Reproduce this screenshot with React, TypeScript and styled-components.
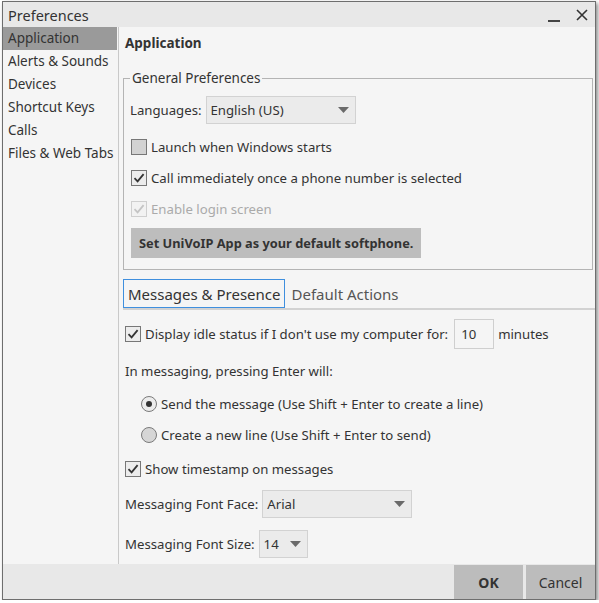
import React from 'react';
import styled, { createGlobalStyle } from 'styled-components';

const GlobalStyle = createGlobalStyle`
  body {
    margin: 0;
    background: #ffffff;
    font-family: "Noto Sans", "Open Sans", sans-serif;
  }
`;

const Window = styled.div`
  margin: 1px 0 0 2px;
  width: 594px;
  height: 599px;
  box-sizing: border-box;
  border: 1px solid #6e6e6e;
  box-shadow: 2px 2px 4px rgba(0, 0, 0, 0.45);
  display: flex;
  flex-direction: column;
  background: #f5f5f5;
  color: #333;
  font-size: 13px;
`;

const TitleBar = styled.div`
  height: 25px;
  flex: none;
  background: #e8e8e8;
  display: flex;
  align-items: center;
  padding: 0 7px 0 5px;
`;

const Title = styled.div`
  flex: 1;
  font-size: 14.5px;
  color: #333;
`;

const Controls = styled.div`
  display: flex;
  align-items: center;
  gap: 16px;
`;

const Minimize = styled.div`
  width: 12px;
  height: 2px;
  background: #444;
  margin-top: 12px;
`;

const Body = styled.div`
  flex: 1;
  display: flex;
  min-height: 0;
`;

const Sidebar = styled.div`
  width: 116px;
  flex: none;
  box-sizing: border-box;
  border-right: 1px solid #c9c9c9;
  display: flex;
  flex-direction: column;
`;

const NavItem = styled.div<{ $active?: boolean }>`
  height: 23px;
  line-height: 23px;
  padding-left: 5px;
  margin-right: 1px;
  font-size: 13.5px;
  white-space: nowrap;
  color: #333;
  background: ${({ $active }) => ($active ? '#9a9a9a' : 'transparent')};
`;

const Content = styled.div`
  flex: 1;
  padding: 0 0 0 4px;
  display: flex;
  flex-direction: column;
`;

const Heading = styled.div`
  padding: 6px 0 0 2px;
  line-height: 20px;
  font-size: 13.5px;
  font-weight: bold;
`;

const Group = styled.fieldset`
  margin: 16px 2px 0 0;
  padding: 9px 6px 11px 6px;
  border: 1px solid #b4b4b4;
  display: flex;
  flex-direction: column;
  min-width: 0;
`;

const Legend = styled.legend`
  padding: 0 2px;
  line-height: 18px;
  font-size: 13.5px;
`;

const Row = styled.div<{ $h?: number; $mt?: number; $indent?: number }>`
  display: flex;
  align-items: center;
  height: ${({ $h }) => $h ?? 31}px;
  margin-top: ${({ $mt }) => $mt ?? 0}px;
  padding-left: ${({ $indent }) => $indent ?? 0}px;
  white-space: nowrap;
  font-size: 13.2px;
  color: #333;
`;

const Label = styled.span<{ $disabled?: boolean }>`
  color: ${({ $disabled }) => ($disabled ? '#aaa' : '#333')};
`;

const SelectBox = styled.div<{ $w: number }>`
  width: ${({ $w }) => $w}px;
  height: 28px;
  box-sizing: border-box;
  margin-left: 4px;
  padding: 0 6px 0 4px;
  background: #ebebeb;
  border: 1px solid #d2d2d2;
  display: flex;
  align-items: center;
  justify-content: space-between;
`;

const Box = styled.span<{ $checked?: boolean; $disabled?: boolean; $flush?: boolean }>`
  width: 16px;
  height: 16px;
  box-sizing: border-box;
  flex: none;
  margin: 0 4px 0 ${({ $flush }) => ($flush ? 0 : 1)}px;
  display: inline-flex;
  align-items: center;
  justify-content: center;
  border: 1px solid ${({ $disabled }) => ($disabled ? '#cfcfcf' : '#777')};
  background: ${({ $checked, $disabled }) =>
    $disabled ? '#f2f2f2' : $checked ? '#ececec' : '#d2d2d2'};
`;

const Radio = styled.span<{ $checked?: boolean }>`
  width: 16px;
  height: 16px;
  box-sizing: border-box;
  flex: none;
  margin-right: 4px;
  border-radius: 50%;
  border: 1px solid #7a7a7a;
  background: ${({ $checked }) => ($checked ? '#ececec' : '#d6d6d6')};
  display: inline-flex;
  align-items: center;
  justify-content: center;

  &::after {
    content: '';
    width: 6px;
    height: 6px;
    border-radius: 50%;
    background: #333;
    display: ${({ $checked }) => ($checked ? 'block' : 'none')};
  }
`;

const ActionButton = styled.div`
  margin: 4px 0 0 1px;
  align-self: flex-start;
  height: 30px;
  line-height: 30px;
  padding: 0 8px;
  width: 290px;
  box-sizing: border-box;
  background: #bdbdbd;
  font-size: 12.8px;
  font-weight: bold;
  white-space: nowrap;
`;

const TabBar = styled.div`
  margin-top: 9px;
  display: flex;
  align-items: flex-end;
  gap: 2px;
  border-bottom: 2px solid #d2d2d2;
`;

const Tab = styled.div<{ $active?: boolean }>`
  height: 29px;
  box-sizing: border-box;
  padding: 0 3px 0 4px;
  display: flex;
  align-items: center;
  font-size: 15px;
  color: ${({ $active }) => ($active ? '#333' : '#555')};
  border: 1px solid ${({ $active }) => ($active ? '#3f8fde' : 'transparent')};
`;

const Panel = styled.div`
  padding: 9px 0 0 2px;
  display: flex;
  flex-direction: column;
`;

const NumberInput = styled.div`
  width: 40px;
  height: 30px;
  box-sizing: border-box;
  margin: 0 4px 0 6px;
  padding-left: 6px;
  border: 1px solid #cfcfcf;
  display: flex;
  align-items: center;
`;

const Footer = styled.div`
  height: 35px;
  flex: none;
  box-sizing: border-box;
  padding-top: 1px;
  background: #e8e8e8;
  display: flex;
  justify-content: flex-end;
  gap: 3px;
`;

const FooterButton = styled.div<{ $primary?: boolean }>`
  width: 69px;
  background: #bcbcbc;
  display: flex;
  align-items: center;
  justify-content: center;
  font-size: 14px;
  font-weight: ${({ $primary }) => ($primary ? 'bold' : 'normal')};
  color: #333;
`;

const Check = ({ color = '#333' }: { color?: string }) => (
  <svg width="12" height="12" viewBox="0 0 12 12">
    <path d="M1.5 6.2 L4.6 9.3 L10.6 2.2" fill="none" stroke={color} strokeWidth="1.8" />
  </svg>
);

const Arrow = () => (
  <svg width="11" height="6" viewBox="0 0 11 6">
    <polygon points="0,0 11,0 5.5,6" fill="#6a6a6a" />
  </svg>
);

const CloseIcon = () => (
  <svg width="12" height="12" viewBox="0 0 12 12">
    <path d="M1 1 L11 11 M11 1 L1 11" stroke="#333" strokeWidth="1.6" />
  </svg>
);

const Select = ({ value, width }: { value: string; width: number }) => (
  <SelectBox $w={width}>
    <span>{value}</span>
    <Arrow />
  </SelectBox>
);

const NAV = ['Application', 'Alerts & Sounds', 'Devices', 'Shortcut Keys', 'Calls', 'Files & Web Tabs'];

const App: React.FC = () => {
  return (
    <>
      <GlobalStyle />
      <Window>
        <TitleBar>
          <Title>Preferences</Title>
          <Controls>
            <Minimize />
            <CloseIcon />
          </Controls>
        </TitleBar>
        <Body>
          <Sidebar>
            {NAV.map((item, i) => (
              <NavItem key={item} $active={i === 0}>
                {item}
              </NavItem>
            ))}
          </Sidebar>
          <Content>
            <Heading>Application</Heading>
            <Group>
              <Legend>General Preferences</Legend>
              <Row $h={28}>
                Languages:
                <Select value="English (US)" width={150} />
              </Row>
              <Row $mt={7}>
                <Box />
                Launch when Windows starts
              </Row>
              <Row>
                <Box $checked>
                  <Check />
                </Box>
                Call immediately once a phone number is selected
              </Row>
              <Row>
                <Box $checked $disabled>
                  <Check color="#c4c4c4" />
                </Box>
                <Label $disabled>Enable login screen</Label>
              </Row>
              <ActionButton>Set UniVoIP App as your default softphone.</ActionButton>
            </Group>
            <TabBar>
              <Tab $active>Messages &amp; Presence</Tab>
              <Tab>Default Actions</Tab>
            </TabBar>
            <Panel>
              <Row $h={30}>
                <Box $checked $flush>
                  <Check />
                </Box>
                Display idle status if I don't use my computer for:
                <NumberInput>10</NumberInput>
                minutes
              </Row>
              <Row $h={30} $mt={7}>
                In messaging, pressing Enter will:
              </Row>
              <Row $h={30} $mt={3} $indent={16}>
                <Radio $checked />
                Send the message (Use Shift + Enter to create a line)
              </Row>
              <Row $h={30} $mt={1} $indent={16}>
                <Radio />
                Create a new line (Use Shift + Enter to send)
              </Row>
              <Row $h={30} $mt={4}>
                <Box $checked $flush>
                  <Check />
                </Box>
                Show timestamp on messages
              </Row>
              <Row $h={28} $mt={6}>
                Messaging Font Face:
                <Select value="Arial" width={150} />
              </Row>
              <Row $h={28} $mt={12}>
                Messaging Font Size:
                <Select value="14" width={49} />
              </Row>
            </Panel>
          </Content>
        </Body>
        <Footer>
          <FooterButton $primary>OK</FooterButton>
          <FooterButton>Cancel</FooterButton>
        </Footer>
      </Window>
    </>
  );
};

export default App;
